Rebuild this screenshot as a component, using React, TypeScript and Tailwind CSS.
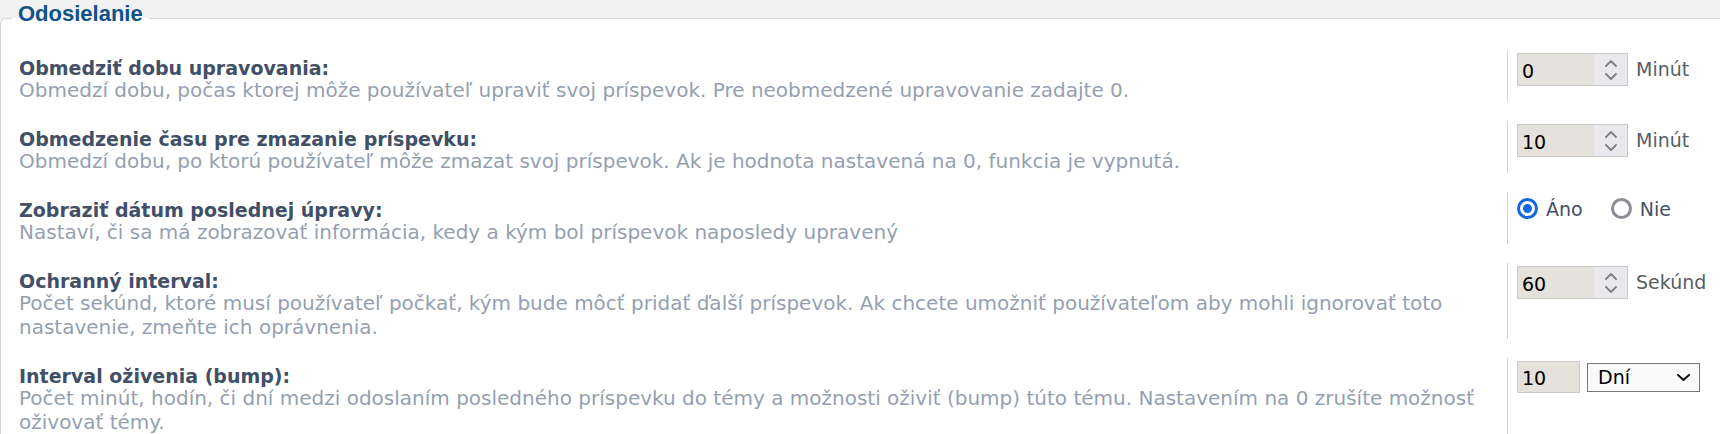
import React from 'react';

const Chevron = ({ dir, color = '#7f7f86', w = 12, h = 7, sw = 1.8 }: { dir: 'up' | 'down'; color?: string; w?: number; h?: number; sw?: number }) => (
  <svg width={w} height={h} viewBox={`0 0 ${w} ${h}`} fill="none">
    {dir === 'up' ? (
      <polyline points={`1,${h - 1} ${w / 2},1 ${w - 1},${h - 1}`} stroke={color} strokeWidth={sw} strokeLinecap="round" strokeLinejoin="round" />
    ) : (
      <polyline points={`1,1 ${w / 2},${h - 1} ${w - 1},1`} stroke={color} strokeWidth={sw} strokeLinecap="round" strokeLinejoin="round" />
    )}
  </svg>
);

// number field with the native-looking spinner
const NumberField = ({ value, unit }: { value: string; unit: string }) => (
  <div className="flex items-center gap-[8px]">
    <div className="flex h-[33px] w-[111px] border border-[#c9c9c9] bg-[#e5e1db]">
      <div className="flex flex-1 items-center pl-[4px] pt-[3px] text-[19px] text-black">{value}</div>
      <div className="flex w-[33px] flex-col items-center justify-center gap-[6px] bg-[#e9e9ed]">
        <Chevron dir="up" />
        <Chevron dir="down" />
      </div>
    </div>
    <span className="text-[19px] text-[#5b5e64]">{unit}</span>
  </div>
);

const Radio = ({ checked, label }: { checked?: boolean; label: string }) => (
  <label className="flex items-start gap-[8px]">
    {checked ? (
      <span className="flex h-[21px] w-[21px] items-center justify-center rounded-full border-[3px] border-[#1468dc]">
        <span className="h-[9px] w-[9px] rounded-full bg-[#1468dc]" />
      </span>
    ) : (
      <span className="h-[21px] w-[21px] rounded-full border-[3px] border-[#8c8c95]" />
    )}
    <span className="pt-[1px] text-[19px] leading-[21px] text-[#425067]">{label}</span>
  </label>
);

const rows: { label: string; explain: string; control: React.ReactNode }[] = [
  {
    label: 'Obmedziť dobu upravovania:',
    explain: 'Obmedzí dobu, počas ktorej môže používateľ upraviť svoj príspevok. Pre neobmedzené upravovanie zadajte 0.',
    control: <NumberField value="0" unit="Minút" />,
  },
  {
    label: 'Obmedzenie času pre zmazanie príspevku:',
    explain: 'Obmedzí dobu, po ktorú používateľ môže zmazat svoj príspevok. Ak je hodnota nastavená na 0, funkcia je vypnutá.',
    control: <NumberField value="10" unit="Minút" />,
  },
  {
    label: 'Zobraziť dátum poslednej úpravy:',
    explain: 'Nastaví, či sa má zobrazovať informácia, kedy a kým bol príspevok naposledy upravený',
    control: (
      <div className="flex gap-[28px] pt-[3px]">
        <Radio checked label="Áno" />
        <Radio label="Nie" />
      </div>
    ),
  },
  {
    label: 'Ochranný interval:',
    explain:
      'Počet sekúnd, ktoré musí používateľ počkať, kým bude môcť pridať ďalší príspevok. Ak chcete umožniť používateľom aby mohli ignorovať toto nastavenie, zmeňte ich oprávnenia.',
    control: <NumberField value="60" unit="Sekúnd" />,
  },
  {
    label: 'Interval oživenia (bump):',
    explain:
      'Počet minút, hodín, či dní medzi odoslaním posledného príspevku do témy a možnosti oživiť (bump) túto tému. Nastavením na 0 zrušíte možnosť oživovať témy.',
    control: (
      <div className="flex items-start gap-[7px]">
        <div className="flex h-[32px] w-[63px] items-center border border-[#c9c9c9] bg-[#e5e1db] pl-[4px] pt-[2px] text-[19px] text-black">
          10
        </div>
        <div className="mt-[2px] flex h-[29px] w-[113px] items-center justify-between border border-[#767676] bg-[#fafafa] pl-[10px] pr-[9px] text-[19px] text-black">
          <span>Dní</span>
          <Chevron dir="down" color="#111" w={13} h={7} sw={2} />
        </div>
      </div>
    ),
  },
];

export default function App() {
  return (
    <div className="min-h-screen overflow-hidden bg-[#f2f2f2] font-['DejaVu_Sans',sans-serif]">
      <fieldset className="min-w-0 rounded-tl-[6px] border-l border-t border-[#d6d6d6] bg-white pt-[13px]">
        <legend className="ml-[11px] px-[6px] pb-[10px] font-['Liberation_Sans',sans-serif] text-[22px] font-bold leading-[27px] text-[#105289]">
          Odosielanie
        </legend>
        <div className="flex flex-col gap-[19px]">
          {rows.map((r) => (
            <div key={r.label} className="flex">
              <div className="flex-1 pl-[18px] pr-[20px] pt-[9px]">
                <div className="text-[19px] font-bold leading-[19px] text-[#425067]">{r.label}</div>
                <div className="text-[20px] leading-[24px] text-[#959fb0]">{r.explain}</div>
              </div>
              <div className="w-[213px] shrink-0 border-l border-[#d3d3d3] pl-[9px] pt-[3px]">{r.control}</div>
            </div>
          ))}
        </div>
      </fieldset>
    </div>
  );
}
